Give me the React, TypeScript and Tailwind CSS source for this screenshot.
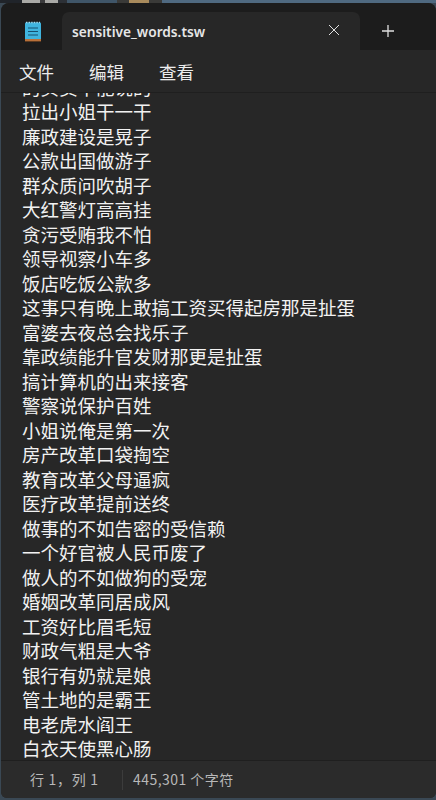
import React from "react";

const lines = [
  "拉出小姐干一干",
  "廉政建设是晃子",
  "公款出国做游子",
  "群众质问吹胡子",
  "大红警灯高高挂",
  "贪污受贿我不怕",
  "领导视察小车多",
  "饭店吃饭公款多",
  "这事只有晚上敢搞工资买得起房那是扯蛋",
  "富婆去夜总会找乐子",
  "靠政绩能升官发财那更是扯蛋",
  "搞计算机的出来接客",
  "警察说保护百姓",
  "小姐说俺是第一次",
  "房产改革口袋掏空",
  "教育改革父母逼疯",
  "医疗改革提前送终",
  "做事的不如告密的受信赖",
  "一个好官被人民币废了",
  "做人的不如做狗的受宠",
  "婚姻改革同居成风",
  "工资好比眉毛短",
  "财政气粗是大爷",
  "银行有奶就是娘",
  "管土地的是霸王",
  "电老虎水阎王",
  "白衣天使黑心肠",
];

const font = "font-['Noto_Sans_CJK_SC','Noto_Sans',sans-serif]";

export default function App() {
  return (
    <div className={`w-[436px] h-[800px] bg-[#3a4854] overflow-hidden pl-[1px] ${font}`}>
      <div className="h-[3px] flex ml-[-1px]">
        <div className="w-[22px] bg-[#20242a]" />
        <div className="w-[18px] bg-[#a9a9a6]" />
        <div className="w-[5px] bg-[#3a3a3c]" />
        <div className="w-[13px] bg-[#a9a9a6]" />
        <div className="w-[9px] bg-[#2c3036]" />
        <div className="w-[50px] bg-[#3f5568]" />
        <div className="w-[12px] bg-[#3a3a38]" />
        <div className="w-[20px] bg-[#a88a5c]" />
        <div className="w-[13px] bg-[#3a3a38]" />
        <div className="flex-1 bg-[#4f6980]" />
      </div>
      <div className="h-[795px] flex flex-col bg-[#272727] rounded-t-[8px] rounded-b-[6px] overflow-hidden">
        <div className="h-[47px] shrink-0 flex bg-[#1c1c1c] items-end">
          <div className="w-[61px] h-[47px] flex justify-center pt-[18px]">
            <svg width="16" height="21" viewBox="0 0 16 21" className="ml-[2px]">
              <rect x="0" y="1.5" width="16" height="17.5" rx="1" fill="#3fb4de" />
              <rect x="0" y="18" width="16" height="2" fill="#b8703a" />
              <rect x="0" y="20" width="16" height="1" fill="#5c3a20" />
              <path d="M1 1.5h14" stroke="#9fdcf2" strokeWidth="1.6" strokeDasharray="1.4 1.2" />
              <path d="M3 7h10M3 10.5h10M3 14h10" stroke="#16506e" strokeWidth="1.2" />
            </svg>
          </div>
          <div className="w-[298px] h-[38px] bg-[#272727] rounded-t-[7px] flex items-center pl-[10px] pr-[20px] justify-between">
            <span className="text-[13.7px] font-semibold text-[#e6e6e6] font-['Noto_Sans',sans-serif] pt-[2px]">sensitive_words.tsw</span>
            <svg width="12" height="12" viewBox="0 0 12 12" fill="none" stroke="#e0e0e0" strokeWidth="1" className="mt-[-3px]">
              <path d="M1 1l10 10M11 1L1 11" />
            </svg>
          </div>
          <div className="w-[56px] h-[38px] flex items-center justify-center">
            <svg width="14" height="14" viewBox="0 0 14 14" fill="none" stroke="#e0e0e0" strokeWidth="1.3">
              <path d="M7 1v12M1 7h12" />
            </svg>
          </div>
        </div>
        <div className="h-[43px] shrink-0 flex items-center gap-[35px] pl-[18px] pt-[2px] text-[17.5px] text-[#ececec] border-b border-[#1f1f1f]">
          <span>文件</span>
          <span>编辑</span>
          <span>查看</span>
        </div>
        <div className="flex-1 min-h-0 overflow-hidden pl-[21px] bg-[#272727] text-[18.5px] leading-[24.5px] text-[#f2f2f2]">
          <div className="h-[6px] overflow-hidden relative">
            <div className="absolute bottom-0 left-0 whitespace-nowrap">的买卖不能说的</div>
          </div>
          {lines.map((l, i) => (
            <div key={i} className="whitespace-nowrap">{l}</div>
          ))}
        </div>
        <div className="h-[38px] shrink-0 flex items-center bg-[#2b2b2b] border-t border-[#1f1f1f] text-[14px] text-[#b8b8b8]">
          <span className="pl-[29px] w-[121px] whitespace-pre tracking-[0.7px]">行 1，列 1</span>
          <span className="h-[20px] border-l border-[#3c3c3c] mr-[10px]" />
          <span className="whitespace-pre tracking-[0.45px]">445,301 个字符</span>
        </div>
      </div>
    </div>
  );
}
